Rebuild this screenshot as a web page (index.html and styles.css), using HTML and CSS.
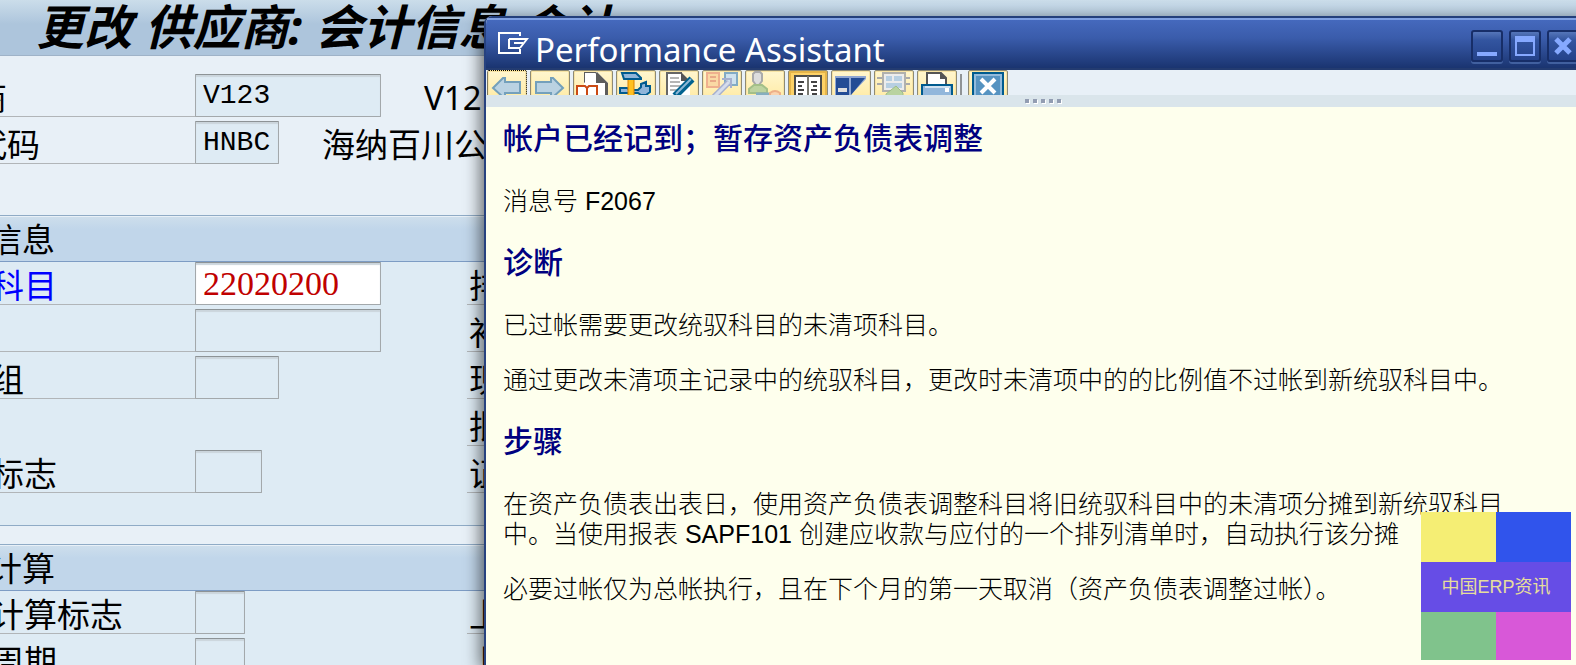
FILE: index.html
```html
<!DOCTYPE html>
<html lang="zh-CN">
<head>
    <meta charset="UTF-8">
    <meta name="viewport" content="width=device-width, initial-scale=1.0">
    <title>Performance Assistant</title>
    <link rel="stylesheet" href="styles.css">
</head>
<body>
    <main class="screen">
        <h1 class="screen-title">更改 供应商: 会计信息 会计</h1>

        <form>
            <div class="head-rows">
                <div class="row">
                    <label class="label" for="vendor">商</label>
                    <input class="field w-long" id="vendor" value="V123" readonly>
                    <span class="desc">V12</span>
                </div>
                <div class="row">
                    <label class="label" for="company">代码</label>
                    <input class="field w-mid" id="company" value="HNBC" readonly>
                    <span class="desc">海纳百川公</span>
                </div>
            </div>

            <section class="group">
                <h2 class="group-title">信息</h2>
                <div class="row">
                    <label class="label required" for="account">科目</label>
                    <div class="cell"><input class="field w-long number" id="account" value="22020200"></div>
                    <span class="label-right">排</span>
                </div>
                <div class="row">
                    <span class="label"></span>
                    <div class="cell"><input class="field w-long" aria-label="总部" readonly></div>
                    <span class="label-right">补</span>
                </div>
                <div class="row">
                    <label class="label" for="authgroup">组</label>
                    <div class="cell"><input class="field w-mid" id="authgroup" readonly></div>
                    <span class="label-right">现</span>
                </div>
                <div class="row">
                    <span class="label no-line"></span>
                    <div class="cell"></div>
                    <span class="label-right">批</span>
                </div>
                <div class="row">
                    <label class="label" for="flag">标志</label>
                    <div class="cell"><input class="field w-short" id="flag" readonly></div>
                    <span class="label-right">证</span>
                </div>
            </section>

            <section class="group">
                <h2 class="group-title">计算</h2>
                <div class="row">
                    <label class="label" for="interest">计算标志</label>
                    <div class="cell"><input class="field w-tiny" id="interest" readonly></div>
                    <span class="label-right">上</span>
                </div>
                <div class="row">
                    <label class="label" for="cycle">周期</label>
                    <div class="cell"><input class="field w-tiny" id="cycle" readonly></div>
                    <span class="label-right">上</span>
                </div>
            </section>
        </form>
    </main>

    <section class="dialog">
        <header class="dialog-title">
            <svg class="title-icon" width="32" height="24" viewBox="0 0 32 24" fill="none" stroke="#fff" stroke-width="2">
                <path d="M23 5V2H2v20h21v-4M12 8v9h11M12 8h18l-7 9M17 12h9"/>
            </svg>
            <h2 class="dialog-name">Performance Assistant</h2>
            <div class="win-buttons">
                <button class="win-btn" type="button" aria-label="Minimize">
                    <svg width="28" height="28"><path d="M4 20h20v4H4z" fill="#86a9ff"/></svg>
                </button>
                <button class="win-btn" type="button" aria-label="Maximize">
                    <svg width="28" height="28"><path d="M4 4h20v20H4zM6 10v12h16V10z" fill="#86a9ff" fill-rule="evenodd"/></svg>
                </button>
                <button class="win-btn" type="button" aria-label="Close">
                    <svg width="28" height="28"><path d="M7 7l14 14M21 7L7 21" stroke="#86a9ff" stroke-width="5"/></svg>
                </button>
            </div>
        </header>

        <div class="toolbar">
            <button class="tool focus" type="button" aria-label="Back">
                <svg width="40" height="40"><path d="M6 18L16 8h2v4h15v11H18v4h-2z" fill="#bad2e2" stroke="#74a0bb" stroke-width="2"/></svg>
            </button>
            <button class="tool" type="button" aria-label="Forward">
                <svg width="40" height="40"><path d="M33 18L23 8h-2v4H6v11h15v4h2z" fill="#bad2e2" stroke="#74a0bb" stroke-width="2"/></svg>
            </button>
            <button class="tool" type="button" aria-label="Application help">
                <svg width="40" height="40">
                    <path d="M11 2h13l11 11v25H11z" fill="#fff"/>
                    <path d="M11 13V2h12v11h9v16h3V13L24 2" fill="#5c5c5c"/>
                    <path d="M12 12V3h10v11h9v14H12z" fill="#fff"/>
                    <path d="M4 16h8l2 2 2-2h8v16H4zM14 18v12" fill="#fff" stroke="#cb4a14" stroke-width="2"/>
                </svg>
            </button>
            <button class="tool" type="button" aria-label="Technical information">
                <svg width="40" height="40">
                    <path d="M4 18h7l3 2h8l3-3v-3l5-2v4h4v6l-4 3h-5l-3-2H4z" fill="#8fb5d9" stroke="#005b8f" stroke-width="2"/>
                    <path d="M12 9h6v25h-6z" fill="#ffc020" stroke="#d98000"/>
                    <path d="M6 3h14l5 5v1H8z" fill="#8fb5d9" stroke="#005b8f" stroke-width="2"/>
                </svg>
            </button>
            <button class="tool" type="button" aria-label="Edit document">
                <svg width="40" height="40">
                    <path d="M8 3h15l8 9v25H8z" fill="#fff"/>
                    <path d="M8 28V3h15" fill="none" stroke="#666" stroke-width="2"/>
                    <path d="M22 2l9 9h-9z" fill="#555"/>
                    <path d="M11 8h9M11 12h10M11 16h12M11 20h8" stroke="#b5b5b5" stroke-width="2"/>
                    <path d="M33 9L16 26" stroke="#00628f" stroke-width="7"/>
                    <path d="M32 9L17 24" stroke="#8eb7d6" stroke-width="2"/>
                </svg>
            </button>
            <button class="tool" type="button" aria-label="Link">
                <svg width="40" height="40">
                    <path d="M5 3h12v14H5z" fill="#fad9a4" stroke="#efb08e" stroke-width="2"/>
                    <path d="M8 7h6M8 11h6" stroke="#e9a987" stroke-width="2"/>
                    <path d="M23 3h12v12H23z" fill="#cfe2ee" stroke="#83abc4" stroke-width="2"/>
                    <path d="M20 9h9v9" fill="none" stroke="#a6b0cf" stroke-width="2"/>
                    <path d="M27 12L10 29" stroke="#a6b0cf" stroke-width="6"/>
                    <path d="M27 12L10 29" stroke="#d5ddec" stroke-width="3"/>
                </svg>
            </button>
            <button class="tool" type="button" aria-label="Customizing">
                <svg width="40" height="40">
                    <path d="M8 4l2-2h5l2 2v7l-3 4h-3l-3-4z" fill="#ddd" stroke="#aaa" stroke-width="2"/>
                    <path d="M4 23v-4l5-4h8l5 4v4z" fill="#bdd3a0" stroke="#a3bf88" stroke-width="2"/>
                    <path d="M11 24h16" stroke="#86aebf" stroke-width="3"/>
                    <path d="M25 23q5-4 10 0v5H25z" fill="#fad5b0" stroke="#eeb089" stroke-width="2"/>
                </svg>
            </button>
            <button class="tool active" type="button" aria-label="Glossary">
                <svg width="40" height="40">
                    <path d="M7 6h26v30H7z" fill="#fff" stroke="#4d4d48" stroke-width="2"/>
                    <path d="M20 6v30" stroke="#77776f" stroke-width="2"/>
                    <path d="M10 12h6M10 16h4M10 20h6M10 24h5M23 12h6M25 16h4M23 20h6M24 24h5" stroke="#444" stroke-width="2"/>
                </svg>
            </button>
            <button class="tool" type="button" aria-label="Translate">
                <svg width="40" height="40">
                    <path d="M4 6h31v3L17 28v8H4z" fill="#8ea6d3"/>
                    <path d="M5 8h13v28H5zM20 8h14L20 25z" fill="#234c95"/>
                    <path d="M7 18h9v4H7z" fill="#dedede"/>
                </svg>
            </button>
            <button class="tool" type="button" aria-label="Display">
                <svg width="40" height="40">
                    <path d="M3 8h6M3 14h6M30 8h6M30 14h6" stroke="#aaa" stroke-width="2"/>
                    <path d="M9 3h22v18H9z" fill="#ececec" stroke="#b1b1ad" stroke-width="2"/>
                    <path d="M12 6h6v5h-6zM20 6h8v5h-8zM12 13h16v5H12z" fill="#b7cfe2"/>
                    <path d="M12 24l10-8 7 7v12H12z" fill="#b9d3a0" stroke="#9fbd88"/>
                </svg>
            </button>
            <button class="tool" type="button" aria-label="Print">
                <svg width="40" height="40">
                    <path d="M10 14V3h14l5 5v6" fill="#fff" stroke="#555" stroke-width="2"/>
                    <path d="M23 2l7 7h-7z" fill="#555"/>
                    <path d="M5 15h30v16H5z" fill="#92b7db" stroke="#005b8f" stroke-width="2"/>
                    <path d="M8 17h25" stroke="#d1e2f1" stroke-width="2"/>
                    <path d="M28 18h4v4h-4z" fill="#fff"/>
                </svg>
            </button>
            <span class="tool-sep"></span>
            <button class="tool" type="button" aria-label="Exit">
                <svg width="40" height="40">
                    <path d="M5 3h30v30H5z" fill="#5693c1" stroke="#005b8f" stroke-width="2"/>
                    <path d="M7 5h26v26H7z" fill="none" stroke="#93bbdc" stroke-width="2"/>
                    <path d="M13 9l14 14M27 9L13 23" stroke="#fff" stroke-width="4"/>
                </svg>
            </button>
        </div>
        <div class="grip"><i></i><i></i><i></i><i></i><i></i></div>

        <article class="help">
            <h3>帐户已经记到；暂存资产负债表调整</h3>
            <p>消息号 F2067</p>
            <h3>诊断</h3>
            <p>已过帐需要更改统驭科目的未清项科目。</p>
            <p>通过更改未清项主记录中的统驭科目，更改时未清项中的的比例值不过帐到新统驭科目中。</p>
            <h3>步骤</h3>
            <p>在资产负债表出表日，使用资产负债表调整科目将旧统驭科目中的未清项分摊到新统驭科目<br>中。当使用报表 SAPF101 创建应收款与应付的一个排列清单时，自动执行该分摊</p>
            <p>必要过帐仅为总帐执行，且在下个月的第一天取消（资产负债表调整过帐）。</p>
        </article>
    </section>

    <div class="stamp">
        <span class="yellow"></span>
        <span class="blue"></span>
        <span class="stamp-name">中国ERP资讯</span>
        <span class="green"></span>
        <span class="pink"></span>
    </div>
</body>
</html>
```
FILE: styles.css
```css
* {
    box-sizing: border-box;
}
body {
    margin: 0;
    height: 100vh;
    overflow: hidden;
    position: relative;
    background: #e8f0f7;
    color: #000;
    font-family: "Noto Sans", "Noto Sans CJK SC", sans-serif;
    font-size: 33px;
}
h1, h2, h3, p {
    margin: 0;
}

/* vendor screen */
.screen {
    height: 100%;
    overflow: hidden;
}
.screen-title {
    height: 56px;
    padding-left: 36px;
    border-bottom: 1px solid #9fb3c8;
    background: linear-gradient(#cbddea, #adc5dc 24px, #adc5dc);
    font-size: 48px;
    font-style: italic;
    line-height: 54px;
    white-space: nowrap;
}
.head-rows {
    height: 159px;
    padding-top: 18px;
}
.row {
    display: flex;
    height: 43px;
    margin-bottom: 4px;
    white-space: nowrap;
}
.label {
    width: 195px;
    flex: none;
    border-bottom: 1px solid #b1b5b8;
    line-height: 47px;
    text-indent: -9px;
}
.head-rows .label {
    text-indent: -26px;
}
.no-line {
    border-bottom: none;
}
.required {
    color: #0000ff;
}
.cell {
    width: 272px;
    flex: none;
}
.label-right {
    flex: 1;
    padding-left: 2px;
    border-bottom: 1px solid #b1b5b8;
    line-height: 47px;
}
.desc {
    margin-left: 43px;
    line-height: 47px;
}
.field {
    display: block;
    height: 43px;
    margin: 0;
    padding: 0 7px;
    border: 1px solid #a3a8ab;
    border-top-color: #8d9396;
    border-radius: 1px;
    background: #deebf4;
    box-shadow: inset 0 2px 1px #cbd5dc;
    color: #000;
    font-family: "Liberation Mono", monospace;
    font-size: 28px;
    outline: none;
}
.number {
    background: #fff;
    color: #c00000;
    font-family: "Liberation Serif", serif;
    font-size: 34px;
}
.w-long {
    width: 186px;
}
.w-mid {
    width: 84px;
}
.w-short {
    width: 67px;
}
.w-tiny {
    width: 50px;
}
.group {
    margin-bottom: 18px;
    padding-bottom: 28px;
    border-top: 1px solid #8fabc6;
    border-bottom: 1px solid #8fabc6;
    background: #deebf4;
}
.group-title {
    height: 46px;
    border-top: 1px solid #e8f0f7;
    border-bottom: 1px solid #7d9cc4;
    background: linear-gradient(#cddeec, #c1d6ea 12px, #c1d6ea);
    font-size: 33px;
    font-weight: normal;
    line-height: 45px;
    text-indent: -11px;
}

/* help window, runs past the right edge of the desktop */
.dialog {
    position: absolute;
    top: 16px;
    right: -24px;
    bottom: 0;
    left: 484px;
    display: flex;
    flex-direction: column;
    border-left: 2px solid #27427f;
    border-top-left-radius: 8px;
    background: #feffed;
    box-shadow: -4px 4px 16px rgba(0, 0, 0, 0.55);
    overflow: hidden;
}
.dialog-title {
    display: flex;
    flex: none;
    height: 54px;
    padding-left: 11px;
    border-top: 2px solid #233f7b;
    border-bottom: 2px solid #233b70;
    background: linear-gradient(#7fa0e2 2px, #4569bd 2px, #3a5cab 40%, #1a3470);
}
.title-icon {
    flex: none;
    margin-top: 13px;
}
.dialog-name {
    flex: 1;
    padding-left: 6px;
    color: #fff;
    font-size: 33px;
    font-weight: normal;
    line-height: 64px;
    white-space: nowrap;
}
.win-buttons {
    display: flex;
    flex: none;
    gap: 6px;
    width: 129px;
    padding-top: 12px;
}
.win-btn {
    flex: none;
    width: 32px;
    height: 32px;
    padding: 0;
    border: 2px solid #172e68;
    border-radius: 3px;
    background: linear-gradient(#5576b9, #3355a0 8px, #24428a);
    box-shadow: 0 2px 0 #41609f;
}
.win-btn svg {
    display: block;
}
.toolbar {
    display: flex;
    flex: none;
    gap: 3px;
    height: 25px;
    padding-left: 1px;
    background: #e8f0f7;
    overflow: hidden;
}
.tool {
    flex: none;
    width: 40px;
    height: 40px;
    padding: 0;
    border: 1px solid #8d8a76;
    border-radius: 2px;
    background: linear-gradient(#fff6cf, #ffe795);
    box-shadow: inset 0 0 0 1px #f7e3a4;
}
.tool svg {
    display: block;
    margin: -1px;
}
.focus {
    border: 1px dotted #000;
}
.active {
    background: #fdd267;
    box-shadow: inset 0 0 0 2px #e5b54a;
}
.tool-sep {
    flex: none;
    width: 2px;
    height: 25px;
    margin: 4px 3px 0 0;
    background: #8f9396;
}
.grip {
    display: flex;
    flex: none;
    justify-content: center;
    gap: 4px;
    height: 12px;
    padding-top: 4px;
    background: #dae5eb;
}
.grip i {
    width: 4px;
    height: 4px;
    background: #929db2;
    box-shadow: 1px 1px 0 #fff;
}
.help {
    flex: 1;
    padding: 14px 17px;
    font-family: "Liberation Sans", "Noto Sans CJK SC", sans-serif;
    font-size: 25px;
    font-weight: 300;
    line-height: 30px;
    white-space: nowrap;
}
.help h3 {
    margin: 29px 0;
    color: #000080;
    font-size: 30px;
    font-weight: 500;
    line-height: 36px;
}
.help h3:first-child {
    margin-top: 0;
}
.help p {
    margin: 25px 0;
}

/* corner stamp */
.stamp {
    position: absolute;
    right: 5px;
    bottom: 5px;
    display: grid;
    grid-template-columns: 75px 75px;
    grid-template-rows: 50px 50px 48px;
}
.yellow {
    background: #f5ee74;
}
.blue {
    background: #3054ec;
}
.green {
    background: #80c38c;
}
.pink {
    background: #d858d8;
}
.stamp-name {
    grid-column: 1 / 3;
    background: #664de6;
    color: #e6de9c;
    font-family: "Liberation Sans", "Noto Sans CJK SC", sans-serif;
    font-size: 18px;
    line-height: 50px;
    text-align: center;
}
```
